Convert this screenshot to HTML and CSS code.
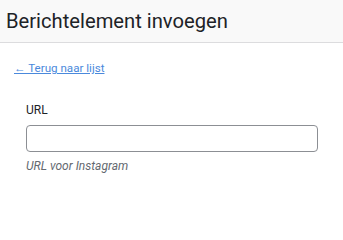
FILE: index.html
```html
<!DOCTYPE html>
<html lang="nl">
<head>
<meta charset="utf-8">
<title>Berichtelement invoegen</title>
<link rel="stylesheet" href="styles.css">
</head>
<body>
<header class="header">
  <h1 class="title">Berichtelement invoegen</h1>
</header>
<main class="content">
  <a class="back" href="#">← Terug naar lijst</a>
  <div class="field">
    <label class="label" for="url">URL</label>
    <input class="input" id="url" type="text">
    <p class="help">URL voor Instagram</p>
  </div>
</main>
</body>
</html>
```
FILE: styles.css
```css
html, body {
  margin: 0;
  padding: 0;
  background: #ffffff;
  font-family: Roboto, "Noto Sans", sans-serif;
}
.header {
  background: #f9f9f9;
  border-bottom: 1px solid #dcdcde;
  height: 43px;
  box-sizing: border-box;
  padding: 0 6px;
  display: flex;
  align-items: center;
}
.title {
  margin: 0;
  font-size: 20.2px;
  line-height: 24px;
  font-weight: 400;
  color: #1d2327;
}
.content {
  padding: 14px 14px 0;
}
.back {
  display: inline-block;
  font-size: 11.6px;
  line-height: 16px;
  color: #4a89dc;
  text-decoration: underline;
}
.field {
  padding: 26px 12px 0;
  display: flex;
  flex-direction: column;
}
.label {
  font-size: 12px;
  color: #1d2327;
  line-height: 16px;
}
.input {
  margin-top: 7px;
  height: 27px;
  box-sizing: border-box;
  width: 292px;
  border: 1px solid #8c8f94;
  border-radius: 4px;
  background: #fff;
}
.help {
  margin: 6px 0 0;
  font-size: 12px;
  line-height: 16px;
  font-style: italic;
  color: #646970;
}
```
